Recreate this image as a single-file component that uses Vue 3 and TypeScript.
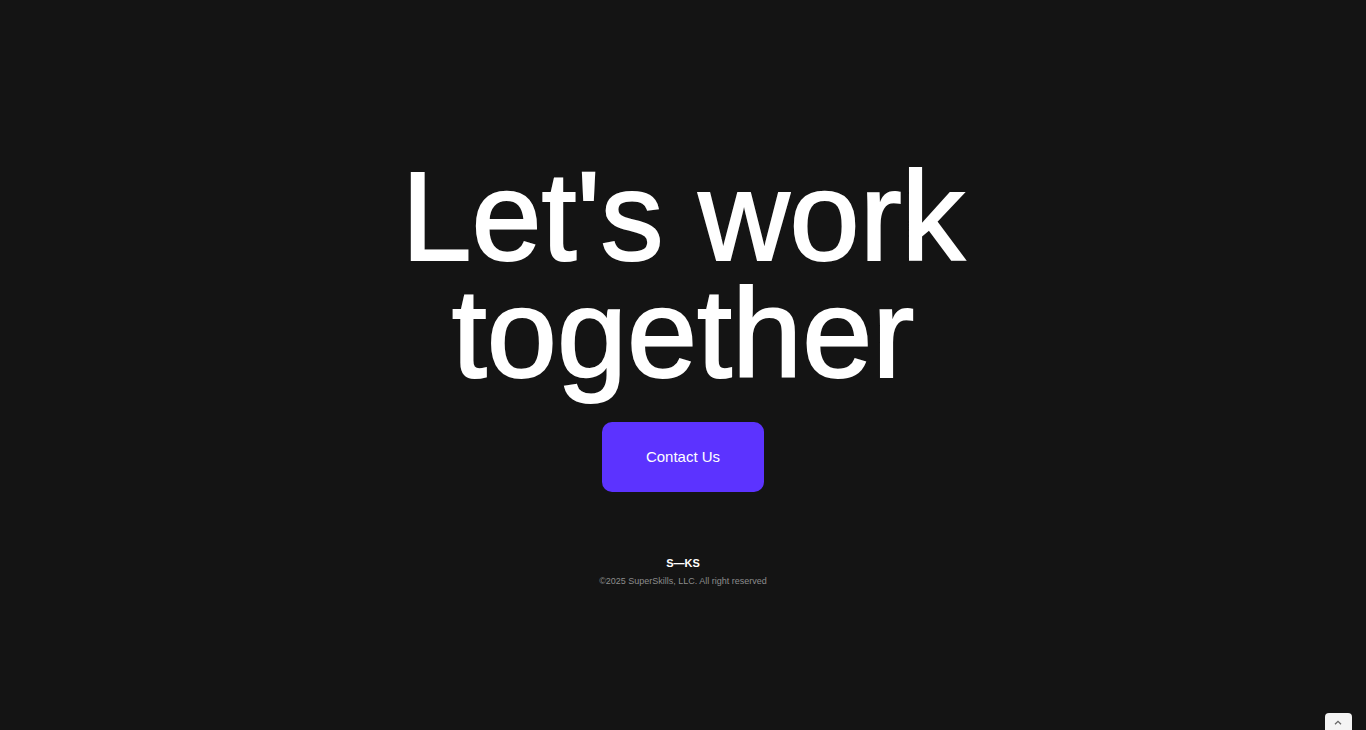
<script setup lang="ts">
const titleLines: string[] = ["Let's work", 'together']

function scrollToTop(): void {
  window.scrollTo({ top: 0, behavior: 'smooth' })
}
</script>

<template>
  <div class="page">
    <main class="hero">
      <h1 class="title">
        <span v-for="line in titleLines" :key="line" class="line">{{ line }}</span>
      </h1>
      <a class="contact" href="#contact">Contact Us</a>
    </main>
    <footer class="footer">
      <p class="logo">S<span class="dash">—</span>KS</p>
      <p class="copyright">©2025 SuperSkills, LLC. All right reserved</p>
    </footer>
    <button class="to-top" type="button" aria-label="Back to top" @click="scrollToTop">
      <svg width="9" height="5" viewBox="0 0 9 5" aria-hidden="true">
        <path d="M1 4.3 4 1.3 7 4.3" fill="none" stroke="#666" stroke-width="1.3" />
      </svg>
    </button>
  </div>
</template>

<style>
body {
  margin: 0;
  background: #141414;
}
</style>

<style scoped>
.page {
  box-sizing: border-box;
  min-height: 100vh;
  padding-top: 158px;
  display: flex;
  flex-direction: column;
  align-items: center;
  background: #141414;
  color: #fff;
  font-family: "Liberation Sans", Arial, sans-serif;
  text-align: center;
}

.hero {
  display: flex;
  flex-direction: column;
  align-items: center;
  gap: 30px;
}

.title {
  margin: 0;
  font-size: 126px;
  font-weight: 400;
  line-height: 117px;
  -webkit-text-stroke: 2px #fff;
}

.line {
  display: block;
}

.contact {
  padding: 0 44px;
  border-radius: 10px;
  background: #5c33ff;
  color: #fff;
  font-size: 15px;
  line-height: 70px;
  text-decoration: none;
}

.footer {
  margin-top: 62px;
}

.logo,
.copyright {
  margin: 0;
}

.logo {
  font-size: 11px;
  font-weight: 700;
  line-height: 18px;
}

.copyright {
  color: #8c8c8c;
  font-size: 9px;
  line-height: 18px;
}

.to-top {
  position: fixed;
  right: 14px;
  bottom: 0;
  width: 27px;
  height: 17px;
  padding: 2px 0 0;
  display: flex;
  align-items: center;
  justify-content: center;
  border: 0;
  border-radius: 4px 4px 0 0;
  background: #f4f4f4;
  cursor: pointer;
}
</style>
